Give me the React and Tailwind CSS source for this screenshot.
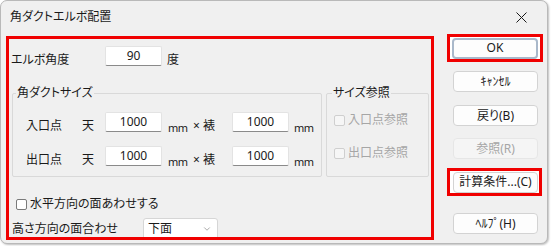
import { ChevronDown } from "lucide-react";

const font = "font-['Noto_Sans','Noto_Sans_CJK_JP',sans-serif] [font-feature-settings:'palt']";

function NumBox({ value }) {
    return (
        <div className="w-[57px] h-[20px] bg-white border border-[#e3e3e3] border-b-[#8a8a8a] rounded-[2px] flex items-center justify-center text-[12px] text-[#1a1a1a]">
            {value}
        </div>
    );
}

function Check({ label, disabled }) {
    return (
        <div className={`flex items-center h-[16px] ${disabled ? "text-[#a6a6a6]" : "text-[#1a1a1a]"}`}>
            <span
                className={`w-[11px] h-[11px] rounded-[2px] border ${
                    disabled ? "border-[#cfcfcf] bg-[#f6f6f6]" : "border-[#7a7a7a] bg-white"
                }`}
            />
            <span className="ml-[3px] text-[12px] leading-[16px]">{label}</span>
        </div>
    );
}

function Btn({ children, disabled, isDefault, className = "" }) {
    return (
        <div
            className={`h-[21px] flex items-center justify-center rounded-[4px] text-[12px] ${
                disabled
                    ? "bg-[#f5f5f5] border border-[#e6e6e6] text-[#a6a6a6]"
                    : isDefault
                    ? "bg-[#fdfdfd] border-2 border-[#a9b8ca] text-[#1a1a1a]"
                    : "bg-[#fdfdfd] border border-[#d3d3d3] text-[#1a1a1a]"
            } ${className}`}
        >
            {children}
        </div>
    );
}

function SizeRow({ label }) {
    return (
        <div className="flex items-end h-[20px] pl-[13px] text-[12px] text-[#1a1a1a]">
            <span className="w-[56px] leading-[16px] mb-[-2px]">{label}</span>
            <span className="w-[23px] leading-[16px] mb-[-2px]">天</span>
            <NumBox value="1000" />
            <span className="w-[31px] pl-[6px] text-[11px] tracking-[-0.5px] whitespace-nowrap leading-[16px] mb-[-4px]">mm</span>
            <span className="w-[9px] leading-[16px] mb-[-2px]">×</span>
            <span className="w-[30px] pl-[1px] leading-[16px] mb-[-2px]">裱</span>
            <NumBox value="1000" />
            <span className="pl-[5px] text-[11px] tracking-[-0.5px] leading-[16px] mb-[-4px]">mm</span>
        </div>
    );
}

export default function App() {
    return (
        <div className={`w-[552px] h-[246px] bg-white ${font}`}>
            <div className="w-[548px] h-[244px] border border-[#b9b9b9] rounded-[7px] bg-[#f0f0f0] shadow-[1px_1px_2px_rgba(0,0,0,0.25)] overflow-hidden flex flex-col">
                <div className="h-[32px] flex items-center justify-between pl-[9px] pr-[20px] shrink-0">
                    <span className="text-[12px] text-[#1a1a1a]">角ダクトエルボ配置</span>
                    <svg width="11" height="11" viewBox="0 0 11 11" className="text-[#1a1a1a]">
                        <path d="M0.5 0.5 L10.5 10.5 M10.5 0.5 L0.5 10.5" stroke="currentColor" strokeWidth="1" />
                    </svg>
                </div>

                <div className="flex items-start">
                    <div className="ml-[5px] mt-[3px] w-[428px] h-[204px] border-[3px] border-[#f00000] overflow-hidden">
                        <div className="flex items-end pt-[7px] pl-[2px] text-[12px] text-[#1a1a1a]">
                            <span className="w-[94px] leading-[16px] mb-[-2px]">エルボ角度</span>
                            <NumBox value="90" />
                            <span className="ml-[5px] leading-[16px] mb-[-2px]">度</span>
                        </div>

                        <div className="flex mt-[27px] ml-[3px]">
                            <div className="relative w-[310px] h-[84px] border border-[#d9d9d9] rounded-[2px]">
                                <span className="absolute -top-[9px] left-[3px] px-[1px] bg-[#f0f0f0] text-[12px] leading-[16px] text-[#1a1a1a]">
                                    角ダクトサイズ
                                </span>
                                <div className="pt-[18px] flex flex-col gap-[14px]">
                                    <SizeRow label="入口点" />
                                    <SizeRow label="出口点" />
                                </div>
                            </div>
                            <div className="relative ml-[4px] w-[103px] h-[84px] border border-[#d9d9d9] rounded-[2px]">
                                <span className="absolute -top-[9px] left-[5px] px-[1px] bg-[#f0f0f0] text-[12px] leading-[16px] text-[#1a1a1a]">
                                    サイズ参照
                                </span>
                                <div className="pt-[18px] pl-[7px] flex flex-col gap-[17px]">
                                    <Check label="入口点参照" disabled />
                                    <Check label="出口点参照" disabled />
                                </div>
                            </div>
                        </div>

                        <div className="mt-[19px] ml-[7px]">
                            <Check label="水平方向の面あわせする" />
                        </div>

                        <div className="mt-[6px] ml-[3px] flex items-center text-[12px] text-[#1a1a1a]">
                            <span className="w-[131px] leading-[16px]">高さ方向の面合わせ</span>
                            <div className="w-[75px] h-[22px] bg-white border border-[#d6d6d6] rounded-[3px] flex items-center justify-between pl-[4px] pr-[5px]">
                                <span>下面</span>
                                <ChevronDown size={10} strokeWidth={1.5} className="text-[#777]" />
                            </div>
                        </div>
                    </div>

                    <div className="ml-[13px] mt-[1px] w-[96px] flex flex-col">
                        <div className="h-[28px] border-[3px] border-[#f00000] bg-white flex items-center justify-center">
                            <Btn isDefault className="w-[86px] h-[20px]">OK</Btn>
                        </div>
                        <Btn className="mt-[9px] ml-[6px] w-[85px]">ｷｬﾝｾﾙ</Btn>
                        <Btn className="mt-[13px] ml-[6px] w-[85px]">戻り(B)</Btn>
                        <Btn disabled className="mt-[12px] ml-[6px] w-[85px]">参照(R)</Btn>
                        <div className="mt-[9px] w-[95px] h-[28px] border-[3px] border-[#f00000] bg-white flex items-center pl-[3px]">
                            <Btn className="w-[85px]">計算条件...(C)</Btn>
                        </div>
                        <Btn className="mt-[17px] ml-[6px] w-[85px]">ﾍﾙﾌﾟ(H)</Btn>
                    </div>
                </div>
            </div>
        </div>
    );
}
